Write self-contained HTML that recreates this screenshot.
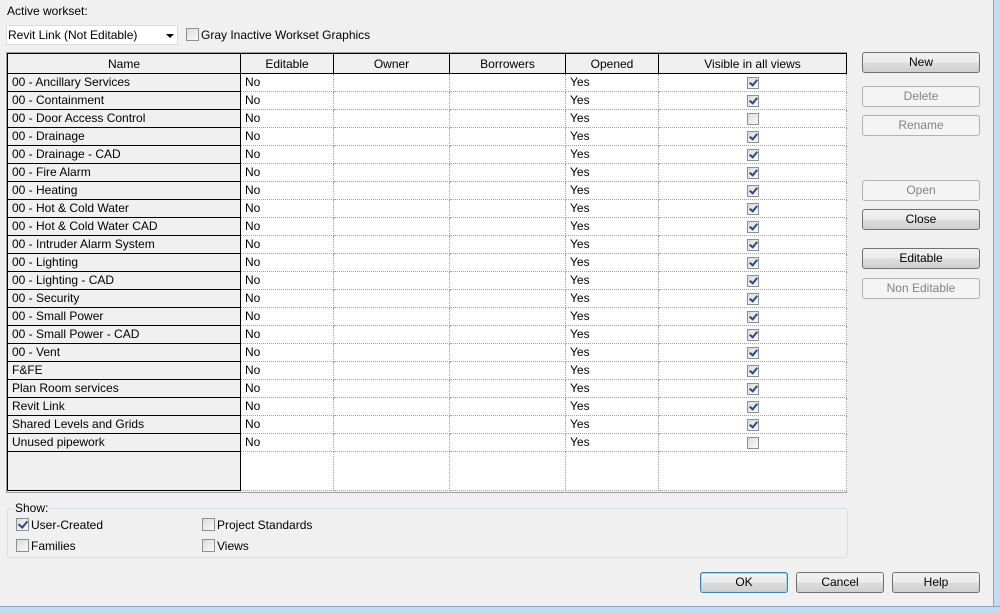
<!DOCTYPE html>
<html><head><meta charset="utf-8"><style>
body{margin:0;width:1000px;height:612px;background:#f0f0f0;font-family:"Liberation Sans",sans-serif;font-size:12px;color:#000;position:relative;overflow:hidden}
.a{position:absolute}
.btn{position:absolute;width:116px;height:19px;border:1px solid #707070;border-radius:3px;background:linear-gradient(#f2f2f2 0%,#ebebeb 50%,#dddddd 51%,#cfcfcf 100%);text-align:center;line-height:19px;font-size:12px}
.dis{border-color:#adb2b5;background:#f4f4f4;color:#838383}
.cb{position:absolute;width:11px;height:11px;border:1px solid #8e8f8f;background:linear-gradient(135deg,#dcdcdc,#fafafa)}
.ck::after{content:"";position:absolute;left:3px;top:0px;width:4px;height:7px;border:solid #2a4a8a;border-width:0 2px 2px 0;transform:rotate(40deg)}
table{position:absolute;left:7px;top:53px;border-collapse:collapse;table-layout:fixed;background:#fff}
td{height:17px;padding:0 0 0 4px;border:1px dotted #a0a0a0;white-space:nowrap;overflow:hidden;line-height:17px}
td.n{background:#f0f0f0;border:1px solid #000;padding-left:4px}
th{height:19px;font-weight:normal;border:1px solid #000;background:#f0f0f0;border-bottom:1px solid #000;padding:0}
td.v{text-align:center;padding:0;position:relative}
td.v span{position:relative;display:inline-block;vertical-align:middle;width:10px;height:10px;border:1px solid #8e8f8f;background:linear-gradient(135deg,#dcdcdc,#fafafa)}
td.v span.c::after{content:"";position:absolute;left:3px;top:0;width:3px;height:6px;border:solid #2a4a8a;border-width:0 2px 2px 0;transform:rotate(40deg)}
</style></head><body>
<div class="a" style="left:7px;top:4px">Active workset:</div>
<div class="a" style="left:6px;top:25px;width:172px;height:20px;background:#fff;border:1px solid #dcdcdc;line-height:19px;padding-left:1px;box-sizing:border-box">Revit Link (Not Editable)<span class="a" style="right:3px;top:8px;border:4px solid transparent;border-top:4px solid #000;border-bottom:0"></span></div>
<div class="cb" style="left:186px;top:28px"></div>
<div class="a" style="left:201px;top:28px">Gray Inactive Workset Graphics</div>
<div class="a" style="left:6px;top:52px;width:841px;height:441px;border:1px solid #a0a0a0;box-sizing:border-box"></div>
<table>
<colgroup><col style="width:233px"><col style="width:93px"><col style="width:116px"><col style="width:116px"><col style="width:93px"><col style="width:188px"></colgroup>
<tr><th>Name</th><th>Editable</th><th>Owner</th><th>Borrowers</th><th>Opened</th><th>Visible in all views</th></tr>
<tr><td class="n">00 - Ancillary Services</td><td>No</td><td></td><td></td><td>Yes</td><td class="v"><span class="c"></span></td></tr>
<tr><td class="n">00 - Containment</td><td>No</td><td></td><td></td><td>Yes</td><td class="v"><span class="c"></span></td></tr>
<tr><td class="n">00 - Door Access Control</td><td>No</td><td></td><td></td><td>Yes</td><td class="v"><span></span></td></tr>
<tr><td class="n">00 - Drainage</td><td>No</td><td></td><td></td><td>Yes</td><td class="v"><span class="c"></span></td></tr>
<tr><td class="n">00 - Drainage - CAD</td><td>No</td><td></td><td></td><td>Yes</td><td class="v"><span class="c"></span></td></tr>
<tr><td class="n">00 - Fire Alarm</td><td>No</td><td></td><td></td><td>Yes</td><td class="v"><span class="c"></span></td></tr>
<tr><td class="n">00 - Heating</td><td>No</td><td></td><td></td><td>Yes</td><td class="v"><span class="c"></span></td></tr>
<tr><td class="n">00 - Hot &amp; Cold Water</td><td>No</td><td></td><td></td><td>Yes</td><td class="v"><span class="c"></span></td></tr>
<tr><td class="n">00 - Hot &amp; Cold Water CAD</td><td>No</td><td></td><td></td><td>Yes</td><td class="v"><span class="c"></span></td></tr>
<tr><td class="n">00 - Intruder Alarm System</td><td>No</td><td></td><td></td><td>Yes</td><td class="v"><span class="c"></span></td></tr>
<tr><td class="n">00 - Lighting</td><td>No</td><td></td><td></td><td>Yes</td><td class="v"><span class="c"></span></td></tr>
<tr><td class="n">00 - Lighting - CAD</td><td>No</td><td></td><td></td><td>Yes</td><td class="v"><span class="c"></span></td></tr>
<tr><td class="n">00 - Security</td><td>No</td><td></td><td></td><td>Yes</td><td class="v"><span class="c"></span></td></tr>
<tr><td class="n">00 - Small Power</td><td>No</td><td></td><td></td><td>Yes</td><td class="v"><span class="c"></span></td></tr>
<tr><td class="n">00 - Small Power - CAD</td><td>No</td><td></td><td></td><td>Yes</td><td class="v"><span class="c"></span></td></tr>
<tr><td class="n">00 - Vent</td><td>No</td><td></td><td></td><td>Yes</td><td class="v"><span class="c"></span></td></tr>
<tr><td class="n">F&amp;FE</td><td>No</td><td></td><td></td><td>Yes</td><td class="v"><span class="c"></span></td></tr>
<tr><td class="n">Plan Room services</td><td>No</td><td></td><td></td><td>Yes</td><td class="v"><span class="c"></span></td></tr>
<tr><td class="n">Revit Link</td><td>No</td><td></td><td></td><td>Yes</td><td class="v"><span class="c"></span></td></tr>
<tr><td class="n">Shared Levels and Grids</td><td>No</td><td></td><td></td><td>Yes</td><td class="v"><span class="c"></span></td></tr>
<tr><td class="n">Unused pipework</td><td>No</td><td></td><td></td><td>Yes</td><td class="v"><span></span></td></tr>
<tr><td class="n" style="height:38px"></td><td></td><td></td><td></td><td></td><td></td></tr>
</table>
<div class="a" style="left:7px;top:508px;width:841px;height:50px;border:1px solid #d5dfe5;border-radius:3px;box-sizing:border-box"></div>
<div class="a" style="left:14px;top:501px;background:#f0f0f0;padding:0 1px">Show:</div>
<div class="cb ck" style="left:16px;top:518px"></div><div class="a" style="left:31px;top:518px">User-Created</div>
<div class="cb" style="left:16px;top:539px"></div><div class="a" style="left:31px;top:539px">Families</div>
<div class="cb" style="left:202px;top:518px"></div><div class="a" style="left:217px;top:518px">Project Standards</div>
<div class="cb" style="left:202px;top:539px"></div><div class="a" style="left:217px;top:539px">Views</div>
<div class="btn" style="left:862px;top:52px">New</div>
<div class="btn dis" style="left:862px;top:86px">Delete</div>
<div class="btn dis" style="left:862px;top:115px">Rename</div>
<div class="btn dis" style="left:862px;top:180px">Open</div>
<div class="btn" style="left:862px;top:209px">Close</div>
<div class="btn" style="left:862px;top:248px">Editable</div>
<div class="btn dis" style="left:862px;top:278px">Non Editable</div>
<div class="btn" style="left:700px;top:572px;width:86px;border-color:#3c7fb1;box-shadow:inset 0 0 0 1px #a6d8f5">OK</div>
<div class="btn" style="left:796px;top:572px;width:86px">Cancel</div>
<div class="btn" style="left:892px;top:572px;width:86px">Help</div>
<div class="a" style="left:993px;top:0;width:7px;height:612px;background:#c0dcf2;border-left:1px solid #8aa8c4"></div>
<div class="a" style="left:0;top:606px;width:1000px;height:6px;background:#c0dcf2;border-top:1px solid #8aa8c4"></div>
</body></html>
